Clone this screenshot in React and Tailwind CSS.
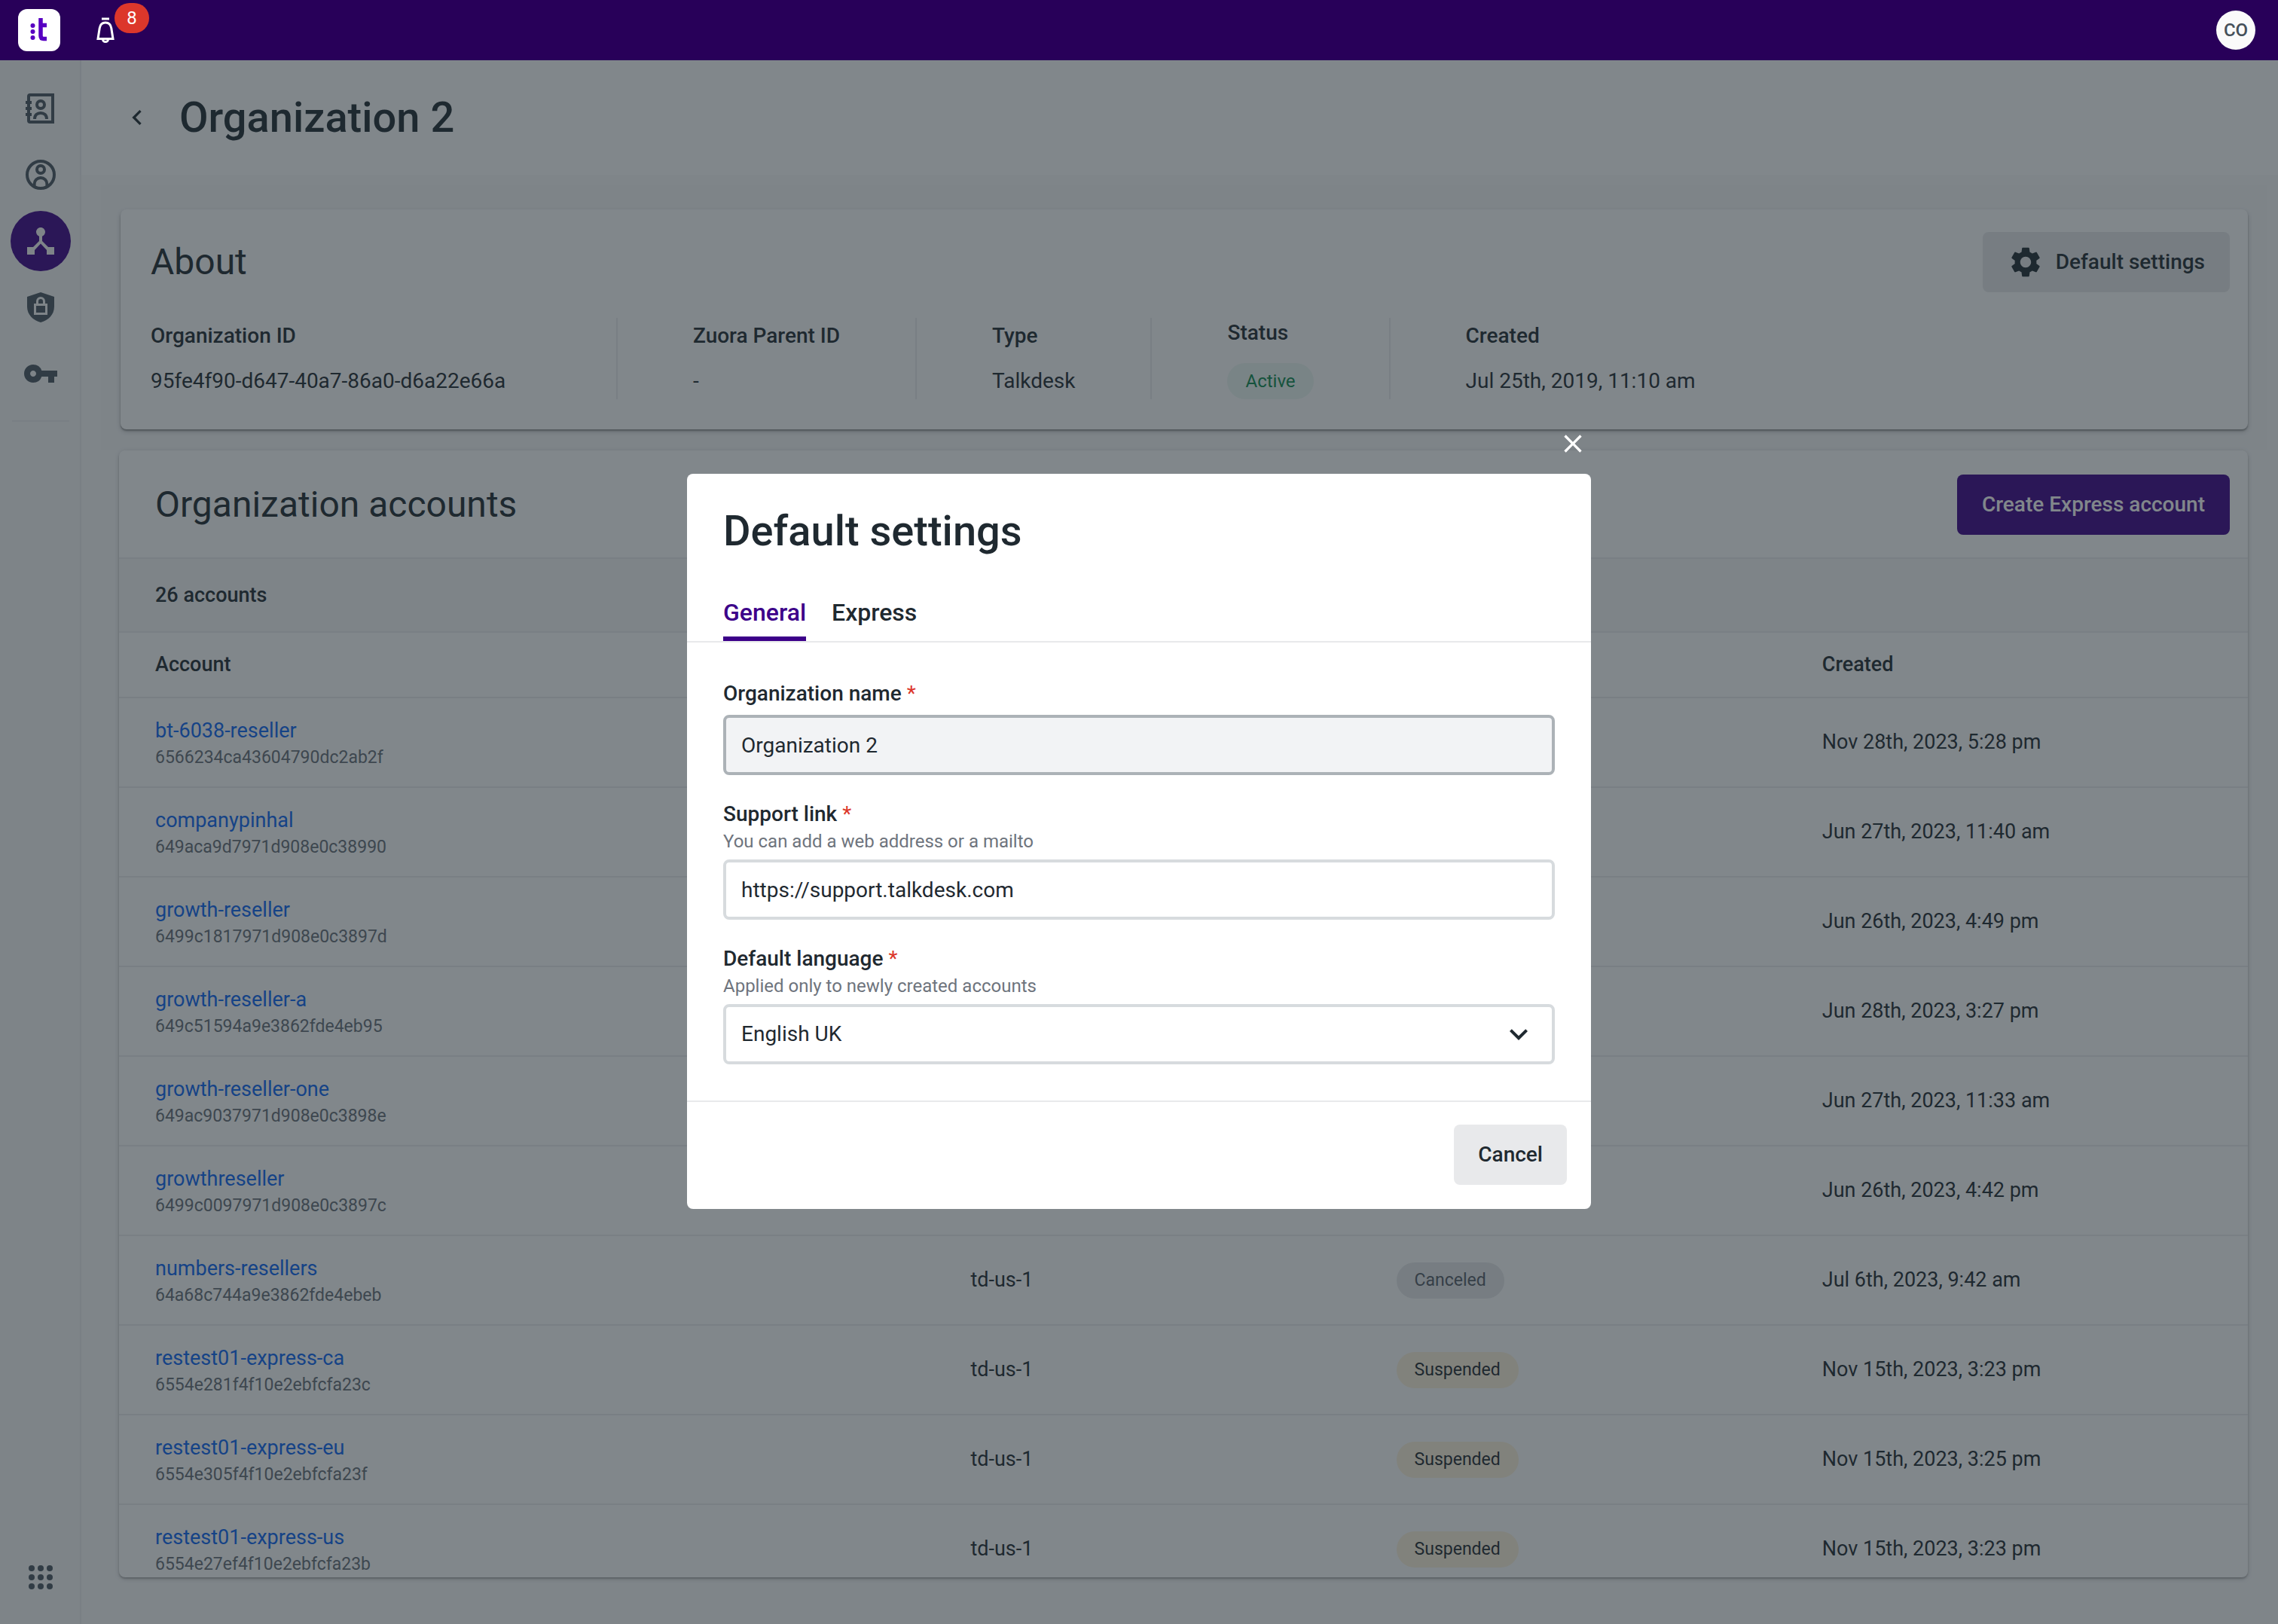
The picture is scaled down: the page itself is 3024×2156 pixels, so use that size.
import React, { useState } from 'react'
import { MdChevronLeft, MdClose, MdDeviceHub, MdExpandMore, MdSettings, MdVpnKey } from 'react-icons/md'

const accounts = [
  { name: 'bt-6038-reseller', id: '6566234ca43604790dc2ab2f', region: 'td-us-1', status: 'Active', created: 'Nov 28th, 2023, 5:28 pm' },
  { name: 'companypinhal', id: '649aca9d7971d908e0c38990', region: 'td-us-1', status: 'Active', created: 'Jun 27th, 2023, 11:40 am' },
  { name: 'growth-reseller', id: '6499c1817971d908e0c3897d', region: 'td-us-1', status: 'Active', created: 'Jun 26th, 2023, 4:49 pm' },
  { name: 'growth-reseller-a', id: '649c51594a9e3862fde4eb95', region: 'td-us-1', status: 'Active', created: 'Jun 28th, 2023, 3:27 pm' },
  { name: 'growth-reseller-one', id: '649ac9037971d908e0c3898e', region: 'td-us-1', status: 'Active', created: 'Jun 27th, 2023, 11:33 am' },
  { name: 'growthreseller', id: '6499c0097971d908e0c3897c', region: 'td-us-1', status: 'Active', created: 'Jun 26th, 2023, 4:42 pm' },
  { name: 'numbers-resellers', id: '64a68c744a9e3862fde4ebeb', region: 'td-us-1', status: 'Canceled', created: 'Jul 6th, 2023, 9:42 am' },
  { name: 'restest01-express-ca', id: '6554e281f4f10e2ebfcfa23c', region: 'td-us-1', status: 'Suspended', created: 'Nov 15th, 2023, 3:23 pm' },
  { name: 'restest01-express-eu', id: '6554e305f4f10e2ebfcfa23f', region: 'td-us-1', status: 'Suspended', created: 'Nov 15th, 2023, 3:25 pm' },
  { name: 'restest01-express-us', id: '6554e27ef4f10e2ebfcfa23b', region: 'td-us-1', status: 'Suspended', created: 'Nov 15th, 2023, 3:23 pm' }
]

const pillStyles = {
  Active: 'bg-[#edf8f3] text-[#0b8a4e]',
  Canceled: 'bg-[#e8e9eb] text-[#555c66]',
  Suspended: 'bg-[#fff3dc] text-[#1f2930]'
}

function StatusPill({ status, size = 'text-[24px]' }) {
  return (
    <span className={`inline-flex h-12 items-center rounded-full px-6 leading-8 ${size} ${pillStyles[status]}`}>
      {status}
    </span>
  )
}

function ContactBookIcon() {
  return (
    <svg viewBox="0 0 24 24" className="size-12" fill="none" stroke="currentColor" strokeWidth="2">
      <path d="M20 3H5a1 1 0 0 0-1 1v16a1 1 0 0 0 1 1h15z" />
      <path d="M2 8h4M2 12h4M2 16h4" />
      <circle cx="12" cy="9.5" r="2.5" />
      <path d="M8 19c0-2.6 1.7-4 4-4s4 1.4 4 4" />
    </svg>
  )
}

function UserCircleIcon() {
  return (
    <svg viewBox="0 0 24 24" className="size-12" fill="none" stroke="currentColor" strokeWidth="2">
      <circle cx="12" cy="12" r="9" />
      <circle cx="12" cy="8.5" r="2.5" />
      <path d="M7.8 19.6V18.2a4.2 4.2 0 0 1 8.4 0v1.4" />
    </svg>
  )
}

function ShieldLockIcon() {
  return (
    <svg viewBox="0 0 24 24" className="size-12">
      <path d="M12 2 3 5v6.5C3 16.8 6.9 20.7 12 22c5.1-1.3 9-5.2 9-10.5V5z" fill="currentColor" />
      <g fill="none" stroke="#f7f7f8" strokeWidth="1.5">
        <path d="M8.25 10.25h7.5v6h-7.5z" />
        <path d="M9.75 10.25V8a2.25 2.25 0 0 1 4.5 0v2.25" />
      </g>
    </svg>
  )
}

function BellIcon() {
  return (
    <svg viewBox="0 0 48 48" className="size-12" fill="none" stroke="currentColor" strokeWidth="3">
      <path d="M19 9h10" />
      <path d="M14 35.5 16.2 21.5c.8-5 3.8-7.500 7.8-7.500s7 2.500 7.800 7.500L34 35.500z" />
      <path d="M20.500 36.500a3.500 3 0 0 0 7 0" />
    </svg>
  )
}

function AppsIcon() {
  return (
    <svg viewBox="0 0 24 24" className="size-12" fill="currentColor">
      {[6, 12, 18].map((y) => [6, 12, 18].map((x) => <circle key={`${x}-${y}`} cx={x} cy={y} r="2" />))}
    </svg>
  )
}

function Header() {
  return (
    <header className="flex h-20 shrink-0 items-center bg-[#280059] pr-[30px] pl-6 text-white">
      <a href="#home" aria-label="Home" className="flex size-14 items-center justify-center rounded-xl bg-white">
        <svg viewBox="0 0 56 56" className="size-14">
          <g fill="#5800c2">
            <circle cx="19.5" cy="22" r="3" />
            <circle cx="19.5" cy="30" r="3" />
            <circle cx="19.5" cy="38" r="3" />
          </g>
          <path d="M30 12v23.5q0 4 4 4h4M30 21.5h8" fill="none" stroke="#5800c2" strokeWidth="5.5" />
        </svg>
      </a>
      <button type="button" aria-label="Notifications" className="relative ml-9">
        <BellIcon />
        <span className="absolute -top-3 left-9 flex h-10 w-[46px] items-center justify-center rounded-full bg-[#dc372b] text-[24px]">
          8
        </span>
      </button>
      <button type="button" className="ml-auto flex size-[52px] items-center justify-center rounded-full bg-[#fafafa] text-[24px] font-medium text-[#455059]">
        CO
      </button>
    </header>
  )
}

const navItems = [
  { label: 'Contacts', icon: <ContactBookIcon /> },
  { label: 'Users', icon: <UserCircleIcon /> },
  { label: 'Organizations', icon: <MdDeviceHub className="size-12" />, active: true },
  { label: 'Security', icon: <ShieldLockIcon /> },
  { label: 'Access keys', icon: <MdVpnKey className="size-12" /> }
]

function Sidebar() {
  return (
    <aside className="flex w-[108px] shrink-0 flex-col items-center border-r-2 border-[#ececee] bg-[#f7f7f8] pt-6 pb-[38px] pl-0.5 text-[#4a5660]">
      <nav className="flex flex-col gap-2">
        {navItems.map((item) => (
          <a
            key={item.label}
            href={`#${item.label}`}
            aria-label={item.label}
            className={`flex size-20 items-center justify-center rounded-full ${item.active ? 'bg-[#3c0089] text-[#f7f7f8]' : ''}`}
          >
            {item.icon}
          </a>
        ))}
      </nav>
      <div className="mt-[22px] h-[2px] w-[76px] bg-[#ececee]" />
      <button type="button" aria-label="Apps" className="mt-auto">
        <AppsIcon />
      </button>
    </aside>
  )
}

function Detail({ label, className = 'px-[100px]', children }) {
  return (
    <div className={`flex flex-col justify-center gap-5 leading-10 ${className}`}>
      <dt className="font-medium">{label}</dt>
      <dd className="flex items-center">{children}</dd>
    </div>
  )
}

function About() {
  return (
    <section className="mt-[14px] mr-[14px] ml-[26px] bg-[#f7f7f8] px-[26px] pt-8 pb-7">
      <div className="rounded-lg bg-white pt-[30px] pr-6 pb-10 pl-10 shadow-[0_2px_2px_rgba(0,0,0,0.3),0_3px_6px_rgba(0,0,0,0.2)]">
        <div className="flex items-center justify-between">
          <h2 className="text-[48px] leading-[64px]">About</h2>
          <button type="button" className="flex h-20 items-center gap-4 rounded-lg bg-[#e8e9eb] px-[33px] font-medium">
            <MdSettings className="size-12" />
            Default settings
          </button>
        </div>
        <dl className="mt-[34px] flex divide-x-2 divide-[#ececee]">
          <Detail label="Organization ID" className="min-w-[620px] pr-[100px]">95fe4f90-d647-40a7-86a0-d6a22e66a</Detail>
          <Detail label="Zuora Parent ID">-</Detail>
          <Detail label="Type">Talkdesk</Detail>
          <Detail label="Status"><StatusPill status="Active" /></Detail>
          <Detail label="Created">Jul 25th, 2019, 11:10 am</Detail>
        </dl>
      </div>
    </section>
  )
}

function Accounts() {
  return (
    <section className="mr-10 mb-[62px] ml-[50px] min-h-0 flex-1 overflow-hidden rounded-lg bg-white shadow-[0_2px_2px_rgba(0,0,0,0.2),0_2px_6px_rgba(0,0,0,0.2)]">
      <div className="flex items-center justify-between border-b-2 border-[#ececee] pt-8 pr-6 pb-[30px] pl-12">
        <h2 className="text-[48px] leading-[64px]">Organization accounts</h2>
        <button type="button" className="h-20 rounded-lg bg-[#3c0089] px-[33px] font-medium text-white">
          Create Express account
        </button>
      </div>
      <p className="border-b-2 border-[#ececee] bg-[#f8f8f9] py-7 pl-12 text-[27px] leading-10 font-medium">26 accounts</p>
      <table className="w-full table-fixed text-left text-[27px]">
        <thead>
          <tr className="h-[86px] border-b-2 border-[#ececee]">
            <th className="w-2/5 pl-12 font-medium">Account</th>
            <th className="w-1/5 font-medium">Region</th>
            <th className="w-1/5 font-medium">Status</th>
            <th className="w-1/5 font-medium">Created</th>
          </tr>
        </thead>
        <tbody>
          {accounts.map((account) => (
            <tr key={account.id} className="h-[119px] border-b-2 border-[#ececee]">
              <td className="pl-12">
                <a href={`#${account.name}`} className="block leading-10 text-[#0b64f4]">{account.name}</a>
                <span className="block text-[23px] leading-8 text-[#666d77]">{account.id}</span>
              </td>
              <td>{account.region}</td>
              <td><StatusPill status={account.status} size="text-[23px]" /></td>
              <td>{account.created}</td>
            </tr>
          ))}
        </tbody>
      </table>
    </section>
  )
}

function Field({ id, label, hint, children }) {
  return (
    <div className="flex flex-col">
      <label htmlFor={id} className="leading-10 font-medium">
        {label} <span className="font-normal text-[#dc372b]">*</span>
      </label>
      {hint && <p className="text-[24px] leading-8 text-[#6e747d]">{hint}</p>}
      <div className="relative mt-2">{children}</div>
    </div>
  )
}

function SettingsModal() {
  const [tab, setTab] = useState('General')
  const [link, setLink] = useState('https://support.talkdesk.com')

  return (
    <div className="fixed inset-x-0 top-20 bottom-0 flex items-center justify-center bg-[#1f2930]/56 pb-0.5">
      <div role="dialog" aria-label="Default settings" className="relative w-full max-w-[1200px] rounded-lg bg-white">
        <button type="button" aria-label="Close" className="absolute -top-15 right-1 text-white">
          <MdClose className="size-10" />
        </button>
        <div className="border-b-2 border-[#e8e9eb] px-12 pt-10">
          <h2 className="text-[56px] leading-[72px] font-medium">Default settings</h2>
          <div role="tablist" className="mt-12 flex gap-[34px]">
            {['General', 'Express'].map((name) => (
              <button
                key={name}
                type="button"
                role="tab"
                aria-selected={tab === name}
                onClick={() => setTab(name)}
                className={`border-b-6 pb-2 text-[32px] leading-[48px] font-medium ${tab === name ? 'border-[#3c0089] text-[#3c0089]' : 'border-transparent'}`}
              >
                {name}
              </button>
            ))}
          </div>
        </div>
        <form className="flex flex-col gap-8 p-12">
          <Field id="org-name" label="Organization name">
            <input
              id="org-name"
              readOnly
              value="Organization 2"
              className="block h-20 w-full rounded-lg border-4 border-[#acb2b7] bg-[#f2f3f5] px-5"
            />
          </Field>
          <Field id="support-link" label="Support link" hint="You can add a web address or a mailto">
            <input
              id="support-link"
              value={link}
              onChange={(e) => setLink(e.target.value)}
              className="block h-20 w-full rounded-lg border-4 border-[#d7dbde] bg-white px-5"
            />
          </Field>
          <Field id="language" label="Default language" hint="Applied only to newly created accounts">
            <select id="language" className="block h-20 w-full appearance-none rounded-lg border-4 border-[#d7dbde] bg-white px-5">
              <option>English UK</option>
            </select>
            <MdExpandMore className="pointer-events-none absolute top-4 right-6 size-12" />
          </Field>
        </form>
        <div className="flex justify-end border-t-2 border-[#e8e9eb] px-8 pt-[30px] pb-8">
          <button type="button" className="h-20 rounded-lg bg-[#e8e9eb] px-8 font-medium">Cancel</button>
        </div>
      </div>
    </div>
  )
}

function App() {
  return (
    <div className="flex h-screen flex-col overflow-hidden font-['Roboto',sans-serif] text-[28px] text-[#1f2930]">
      <Header />
      <div className="flex min-h-0 flex-1">
        <Sidebar />
        <main className="flex min-w-0 flex-1 flex-col bg-[#fafafb]">
          <div className="flex h-[152px] shrink-0 items-center gap-9 bg-white pl-[54px]">
            <a href="#organizations" aria-label="Back">
              <MdChevronLeft className="size-10" />
            </a>
            <h1 className="text-[56px] leading-[72px] font-medium">Organization 2</h1>
          </div>
          <About />
          <Accounts />
        </main>
      </div>
      <SettingsModal />
    </div>
  )
}

export default App
